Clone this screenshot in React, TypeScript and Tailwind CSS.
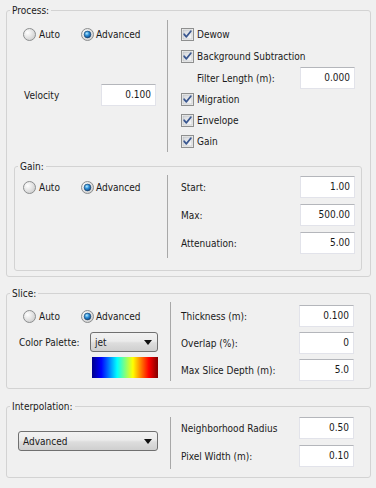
import React from "react";

function Radio({ checked }: { checked?: boolean }) {
  return (
    <svg width="13" height="13" viewBox="0 0 13 13" className="shrink-0">
      <defs>
        <radialGradient id="rg" cx="35%" cy="35%" r="70%">
          <stop offset="0%" stopColor="#ffffff" />
          <stop offset="100%" stopColor="#cfcfcf" />
        </radialGradient>
        <radialGradient id="rb" cx="40%" cy="35%" r="70%">
          <stop offset="0%" stopColor="#b8ecff" />
          <stop offset="45%" stopColor="#2d8fd8" />
          <stop offset="100%" stopColor="#0b3f7c" />
        </radialGradient>
      </defs>
      <circle cx="6.5" cy="6.5" r="6" fill="url(#rg)" stroke="#8c8e8f" strokeWidth="1" />
      {checked && <circle cx="6.5" cy="6.5" r="3.4" fill="url(#rb)" stroke="#1b3f66" strokeWidth="0.6" />}
    </svg>
  );
}

function Check() {
  return (
    <svg width="13" height="13" viewBox="0 0 13 13" className="shrink-0">
      <defs>
        <linearGradient id="cg" x1="0" y1="0" x2="1" y2="1">
          <stop offset="0%" stopColor="#d2d5da" />
          <stop offset="100%" stopColor="#fbfbfb" />
        </linearGradient>
      </defs>
      <rect x="0.5" y="0.5" width="12" height="12" fill="#f4f4f4" stroke="#8e8f8f" />
      <rect x="2" y="2" width="9" height="9" fill="url(#cg)" stroke="#b6b8bb" strokeWidth="0.6" />
      <path d="M3.2 6.3 L5.4 8.8 L9.8 3.2" fill="none" stroke="#3a5790" strokeWidth="1.8" strokeLinecap="round" strokeLinejoin="round" />
    </svg>
  );
}

function Input({ value }: { value: string }) {
  return (
    <div className="ml-auto w-[55px] h-[22px] bg-white border border-[#e2e3ea] border-t-[#b4b6bb] flex items-center justify-end pr-[4px] pb-[2px]">
      {value}
    </div>
  );
}

function Combo({ label, w }: { label: string; w: string }) {
  return (
    <div
      className={`${w} h-[20px] rounded-[3px] border border-[#707070] bg-[linear-gradient(to_bottom,#f2f2f2,#ebebeb_45%,#dddddd_55%,#cfcfcf)] flex items-center pl-[4px] pr-[5px]`}
    >
      <span>{label}</span>
      <svg width="8" height="5" viewBox="0 0 8 5" className="ml-auto">
        <path d="M0 0 H8 L4 5 Z" fill="#111" />
      </svg>
    </div>
  );
}

function RadioPair() {
  return (
    <div className="flex items-center">
      <div className="w-[58px] flex items-center gap-[3px]">
        <Radio />
        <span>Auto</span>
      </div>
      <div className="flex items-center gap-[2px]">
        <Radio checked />
        <span>Advanced</span>
      </div>
    </div>
  );
}

function CheckRow({ label, h }: { label: string; h: string }) {
  return (
    <div className={`${h} flex items-center gap-[3px]`}>
      <Check />
      <span>{label}</span>
    </div>
  );
}

function Legend({ text }: { text: string }) {
  return <legend className="ml-[3px] px-[2px] leading-[13px]">{text}</legend>;
}

function LabeledInput({ label, value }: { label: string; value: string }) {
  return (
    <div className="h-[22px] flex items-center">
      <span>{label}</span>
      <Input value={value} />
    </div>
  );
}

export default function App() {
  return (
    <div className="w-[376px] h-[488px] bg-[#f0f0f0] text-[#1a1a1a] text-[10px] font-['DejaVu_Sans_Condensed','DejaVu_Sans',sans-serif] pt-[4px] pl-[6px] overflow-hidden">
      {/* Process */}
      <fieldset className="w-[365px] border border-[#d3d3d3] rounded-[3px] pb-[5px]">
        <Legend text="Process:" />
        <div className="flex mt-[3px]">
          <div className="w-[160px]">
            <div className="h-[22px] mt-[3px] flex items-center pl-[16px]">
              <RadioPair />
            </div>
            <div className="h-[22px] mt-[39px] flex items-center pl-[17px] pr-[11px]">
              <span>Velocity</span>
              <Input value="0.100" />
            </div>
          </div>
          <div className="flex-1 border-l border-[#a8a8a8] pt-[3px] pl-[13px] pr-[15px]">
            <CheckRow label="Dewow" h="h-[22px]" />
            <CheckRow label="Background Subtraction" h="h-[22px]" />
            <div className="h-[22px] flex items-center pl-[16px]">
              <span>Filter Length (m):</span>
              <Input value="0.000" />
            </div>
            <CheckRow label="Migration" h="h-[21px]" />
            <CheckRow label="Envelope" h="h-[21px]" />
            <CheckRow label="Gain" h="h-[21px]" />
          </div>
        </div>

        {/* Gain */}
        <fieldset className="ml-[7px] mt-[8px] w-[348px] border border-[#d3d3d3] rounded-[3px] pb-[12px]">
          <Legend text="Gain:" />
          <div className="flex mt-[2px]">
            <div className="w-[152px] pl-[8px]">
              <div className="h-[22px] mt-[1px] flex items-center">
                <RadioPair />
              </div>
            </div>
            <div className="flex-1 border-l border-[#a8a8a8] pt-[1px] pb-[4px] pl-[13px] pr-[6px] flex flex-col gap-[6px]">
              <LabeledInput label="Start:" value="1.00" />
              <LabeledInput label="Max:" value="500.00" />
              <LabeledInput label="Attenuation:" value="5.00" />
            </div>
          </div>
        </fieldset>
      </fieldset>

      {/* Slice */}
      <fieldset className="mt-[10px] w-[365px] border border-[#d3d3d3] rounded-[3px] pb-[7px]">
        <Legend text="Slice:" />
        <div className="flex mt-[2px]">
          <div className="w-[163px]">
            <div className="h-[22px] mt-[3px] flex items-center pl-[16px]">
              <RadioPair />
            </div>
            <div className="h-[20px] mt-[5px] flex items-center pl-[12px] pr-[12px]">
              <span>Color Palette:</span>
              <div className="ml-auto">
                <Combo label="jet" w="w-[68px]" />
              </div>
            </div>
            <div className="flex justify-end pr-[12px] mt-[5px]">
              <div className="w-[66px] h-[21px] bg-[linear-gradient(to_right,#00008a,#0000ff_14%,#00ffff_38%,#ffff00_62%,#ff0000_86%,#800000)]" />
            </div>
          </div>
          <div className="flex-1 border-l border-[#a8a8a8] pt-[3px] pl-[10px] pr-[16px] flex flex-col gap-[5px]">
            <LabeledInput label="Thickness (m):" value="0.100" />
            <LabeledInput label="Overlap (%):" value="0" />
            <LabeledInput label="Max Slice Depth (m):" value="5.0" />
          </div>
        </div>
      </fieldset>

      {/* Interpolation */}
      <fieldset className="mt-[11px] w-[365px] border border-[#d3d3d3] rounded-[3px] pb-[8px]">
        <Legend text="Interpolation:" />
        <div className="flex mt-[4px]">
          <div className="w-[163px] pl-[11px] pt-[14px]">
            <Combo label="Advanced" w="w-[140px]" />
          </div>
          <div className="flex-1 border-l border-[#a8a8a8] pb-[2px] pl-[10px] pr-[16px] flex flex-col gap-[6px]">
            <LabeledInput label="Neighborhood Radius" value="0.50" />
            <LabeledInput label="Pixel Width (m):" value="0.10" />
          </div>
        </div>
      </fieldset>
    </div>
  );
}
